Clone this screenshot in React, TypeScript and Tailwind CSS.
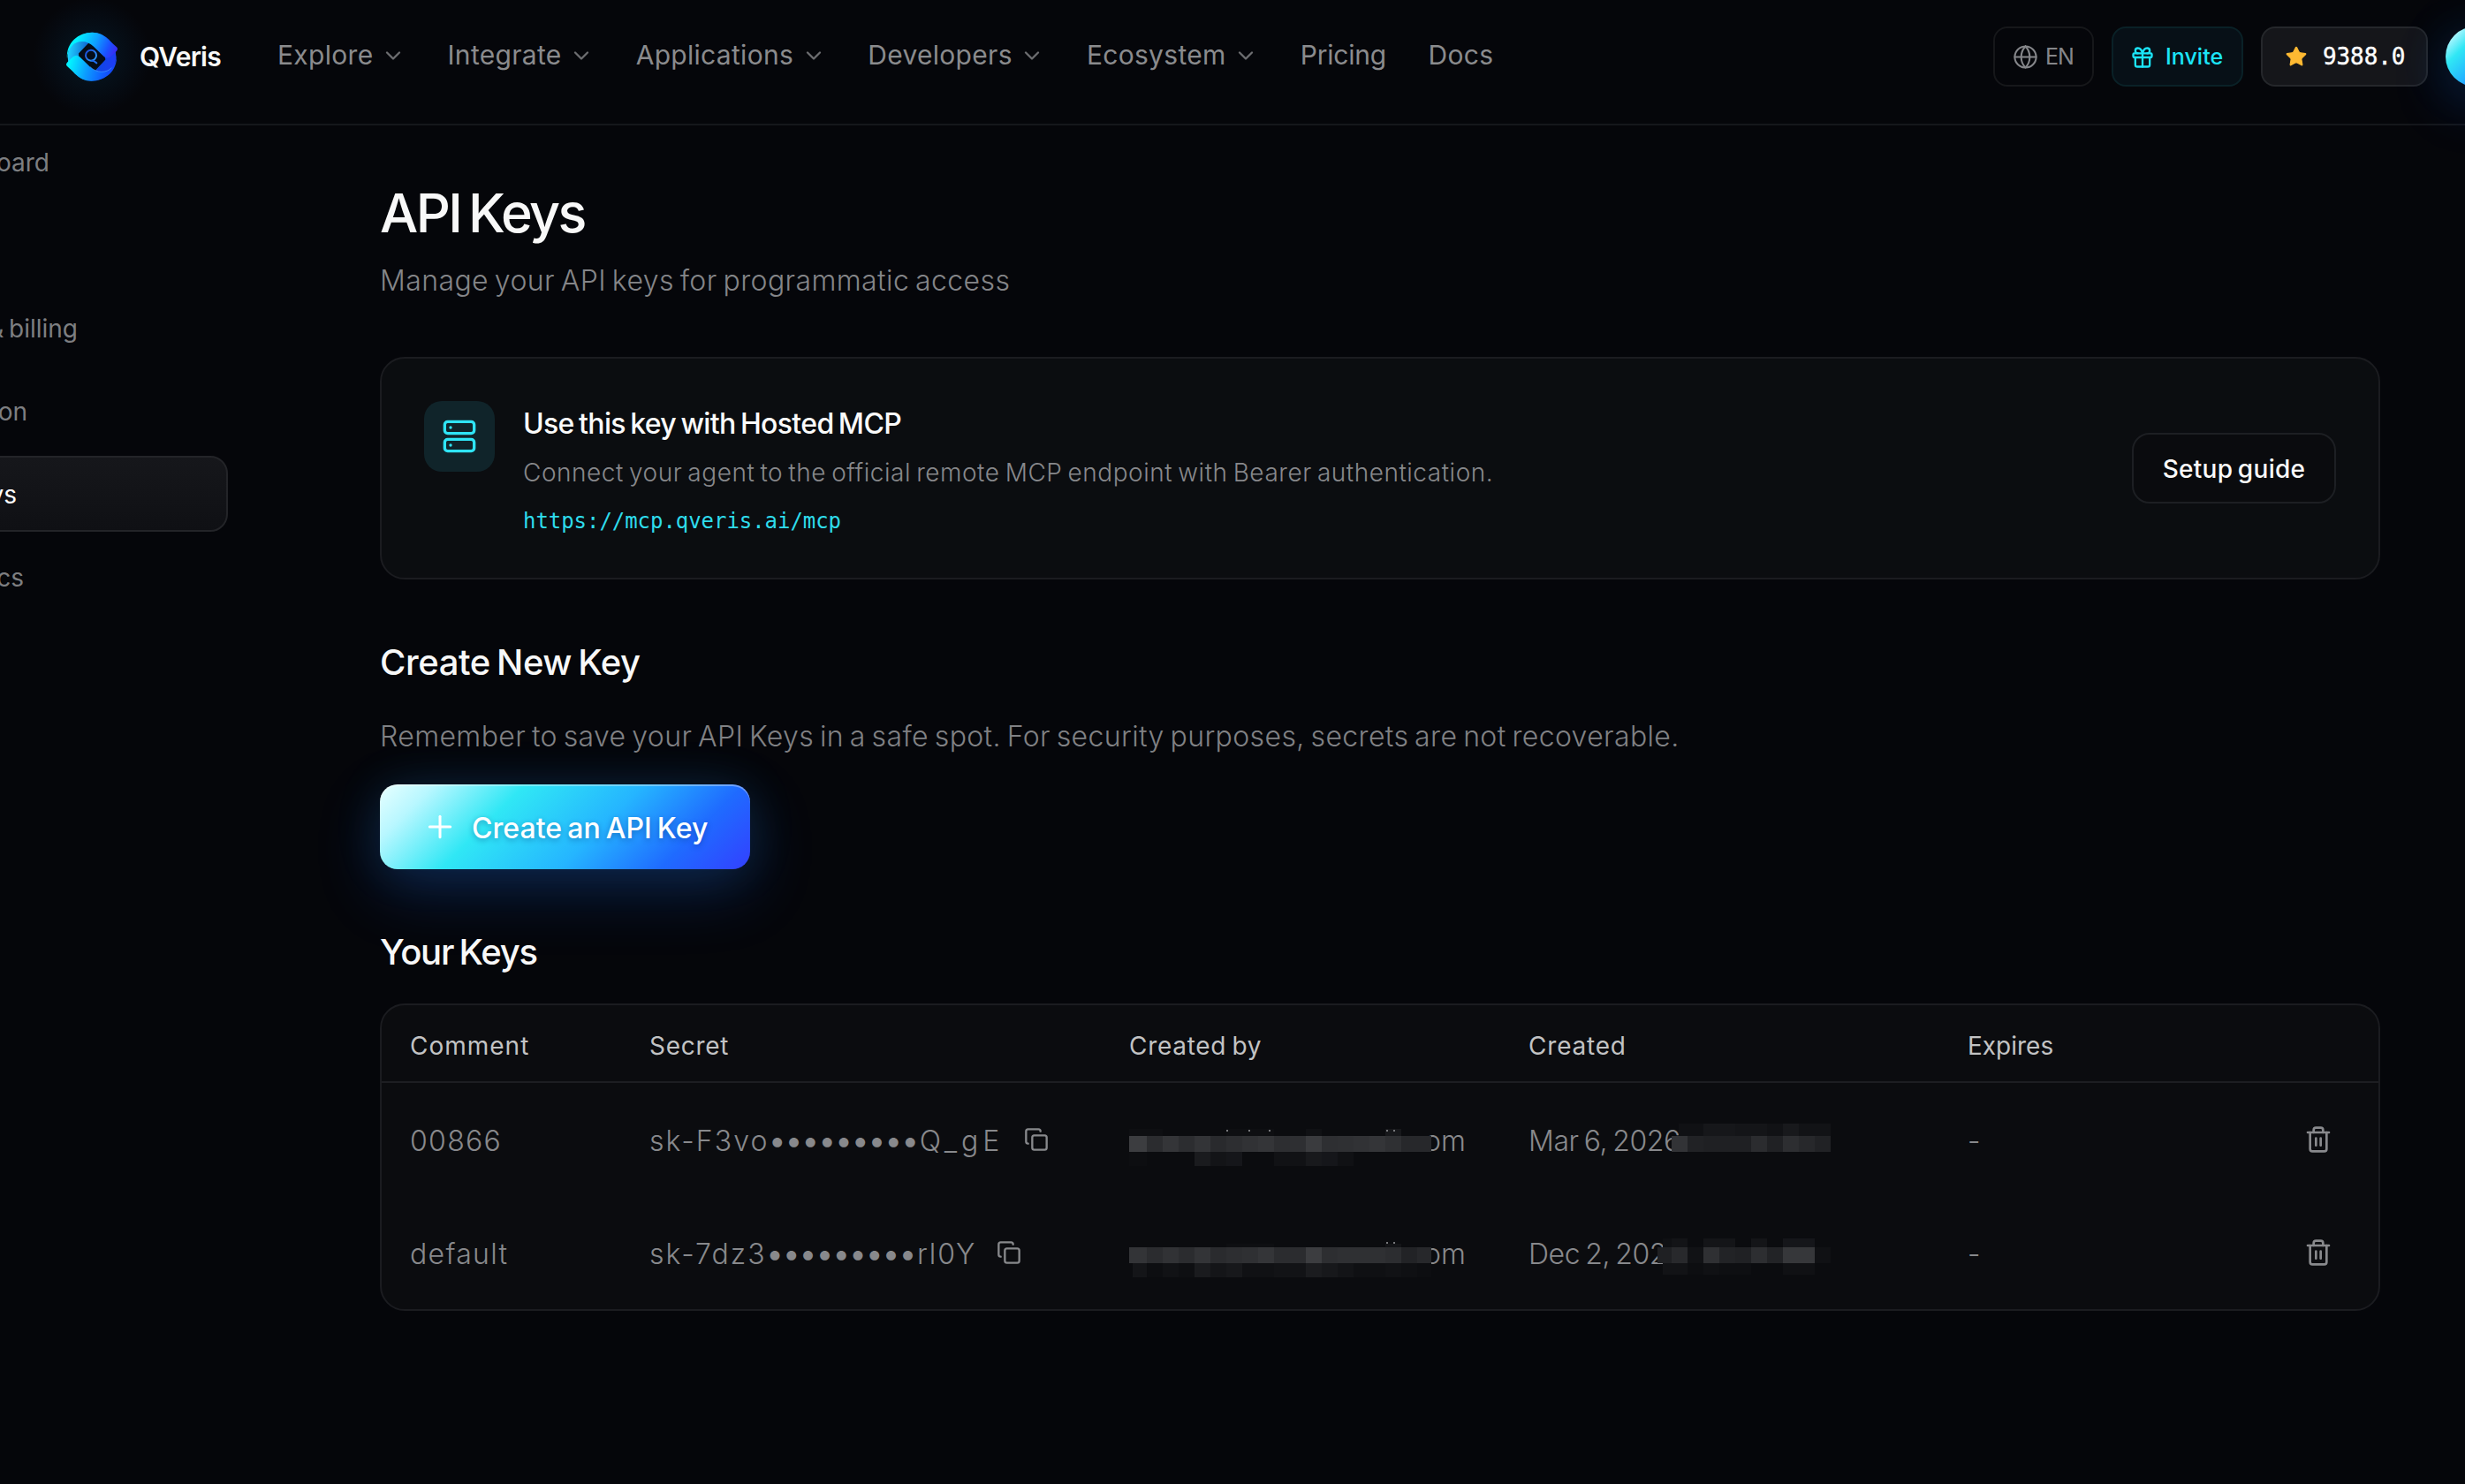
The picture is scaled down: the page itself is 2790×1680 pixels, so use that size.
import { ChevronDown, Copy, Gift, Globe, Plus, Server, Star, Trash2 } from 'lucide-react'

type Cell = [x: number, w: number, color: string]
interface Band { y: number; h: number; cells: Cell[] }

interface KeyRow {
  comment: string
  head: string
  tail: string
  tailClass: string
  owner: Band[]
  ticks: [number, number][]
  date: string
  dateBands: Band[]
}

const NAV = [
  { label: 'Explore', menu: true, cls: '' },
  { label: 'Integrate', menu: true, cls: '' },
  { label: 'Applications', menu: true, cls: '' },
  { label: 'Developers', menu: true, cls: '' },
  { label: 'Ecosystem', menu: true, cls: '' },
  { label: 'Pricing', menu: false, cls: 'tracking-[-0.2px]' },
  { label: 'Docs', menu: false, cls: '' },
]

const SIDE = [
  { label: 'Dashboard', w: 'w-[216px]' },
  { label: '', w: 'w-[140px]' },
  { label: 'Usage & billing', w: 'w-[248px]' },
  { label: 'Invitation', w: 'w-[191px]' },
  { label: 'API Keys', w: 'w-[177px]', active: true },
  { label: 'Analytics', w: 'w-[187px]' },
]

// owner column: first block is 20 wide, the rest 18
function strip(colors: string[]): Cell[] {
  return colors.map((c, i) => (i === 0 ? [0, 20, c] : [20 + (i - 1) * 18, i === 18 ? 16 : 18, c]))
}

const KEYS: KeyRow[] = [
  {
    comment: '00866',
    head: 'sk-F3vo',
    tail: 'Q_gE',
    tailClass: 'tracking-[5px]',
    owner: [
      { y: 52, h: 8, cells: [[0, 38, '#0e0f12'], [110, 54, '#0e0f12'], [200, 18, '#101114'], [290, 18, '#17181b']] },
      { y: 60, h: 18, cells: strip(['#3c3d40', '#2b2c2f', '#343538', '#2c2d30', '#333437', '#292a2d', '#2d2e31', '#313235', '#343538', '#2d2e31', '#2e2f32', '#3a3b3e', '#2e2f32', '#2f3033', '#313235', '#343538', '#2f3033', '#27282b', '#27282b']) },
      { y: 78, h: 16, cells: [[0, 20, '#0d0e11'], [74, 18, '#1a1b1e'], [92, 18, '#131417'], [110, 18, '#15161a'], [164, 36, '#111215'], [200, 18, '#18191c'], [218, 18, '#15161a'], [236, 18, '#101114']] },
    ],
    ticks: [[110, 53], [135, 53], [158, 53], [291, 53], [299, 53]],
    date: 'Mar 6, 2026',
    dateBands: [
      { y: 46, h: 14, cells: [[170, 28, '#101114'], [198, 36, '#16171a'], [234, 36, '#141518'], [270, 18, '#111215'], [288, 18, '#18191c'], [306, 36, '#121316']] },
      { y: 60, h: 18, cells: [[162, 18, '#323336'], [180, 18, '#212225'], [198, 54, '#1f2023'], [252, 18, '#2b2c2f'], [270, 18, '#202124'], [288, 18, '#2d2e31'], [306, 18, '#27282b'], [324, 18, '#212225']] },
    ],
  },
  {
    comment: 'default',
    head: 'sk-7dz3',
    tail: 'rl0Y',
    tailClass: 'tracking-[2px]',
    owner: [
      { y: 54, h: 4, cells: [[110, 54, '#0e0f12'], [290, 18, '#131417']] },
      { y: 58, h: 18, cells: strip(['#333437', '#2b2c2f', '#313235', '#2b2c2f', '#333437', '#2a2b2e', '#2d2e31', '#2f3033', '#343538', '#2b2c2f', '#2b2c2f', '#3c3d40', '#2d2e31', '#2f3033', '#2f3033', '#2f3033', '#2c2d30', '#222326', '#27282b']) },
      { y: 76, h: 16, cells: [[4, 16, '#141518'], ...strip(['#0b0c0f', '#0d0e11', '#111215', '#0e0f12', '#1a1b1e', '#141518', '#17181b', '#101114', '#101114', '#121316', '#121316', '#1b1c1f', '#17181b', '#131417', '#0f1013', '#0f1013', '#111215', '#0f1013', '#0d0e11']).slice(1)] },
    ],
    ticks: [[291, 52], [299, 52]],
    date: 'Dec 2, 2025',
    dateBands: [
      { y: 48, h: 10, cells: [[152, 10, '#0f1013'], [162, 18, '#131417'], [198, 36, '#141518'], [252, 18, '#141518'], [288, 36, '#15161a']] },
      { y: 58, h: 18, cells: [[146, 16, '#1f2023'], [162, 18, '#28292c'], [180, 18, '#111215'], [198, 18, '#2f3033'], [216, 18, '#222326'], [234, 18, '#202124'], [252, 18, '#2d2e31'], [270, 18, '#222326'], [288, 36, '#36373a'], [324, 18, '#101114']] },
      { y: 76, h: 13, cells: [[152, 28, '#121316'], [180, 18, '#0d0e11'], [198, 18, '#101114'], [216, 36, '#0e0f12'], [288, 36, '#101114']] },
    ],
  },
]

function Mosaic({ bands, ticks = [] }: { bands: Band[]; ticks?: [number, number][] }) {
  return (
    <svg className="absolute left-0 top-0" width="352" height="128" shapeRendering="crispEdges">
      {bands.map(b => b.cells.map(([x, w, c]) => <rect key={`${b.y}-${x}`} x={x} y={b.y} width={w} height={b.h} fill={c} />))}
      {ticks.map(([x, y]) => <rect key={x} x={x} y={y} width="2" height="2" fill="#77787b" />)}
    </svg>
  )
}

function Logo() {
  const ribbon = 'M36 127 C32 72 74 38 122 38 C145 38 160 47 172 59 L204 88 Q210 94 204 101 L184 120 Q172 130 160 119 L126 86 C104 64 70 64 53 83 C42 94 37 108 36 127 Z'
  return (
    <svg className="size-20 shrink-0 overflow-visible" viewBox="0 0 240 240" fill="none">
      <defs>
        <radialGradient id="halo">
          <stop offset="0" stopColor="#0b6c90" stopOpacity="0.2" />
          <stop offset="1" stopColor="#0b4c90" stopOpacity="0" />
        </radialGradient>
        <linearGradient id="top" x1="70" y1="60" x2="195" y2="115" gradientUnits="userSpaceOnUse">
          <stop offset="0" stopColor="#02f2ff" />
          <stop offset="0.45" stopColor="#0ea0ff" />
          <stop offset="0.8" stopColor="#1b50ff" />
          <stop offset="1" stopColor="#3a2cf2" />
        </linearGradient>
        <linearGradient id="bottom" x1="45" y1="140" x2="195" y2="180" gradientUnits="userSpaceOnUse">
          <stop offset="0" stopColor="#02f2ff" />
          <stop offset="0.4" stopColor="#0c9cff" />
          <stop offset="0.75" stopColor="#1060ff" />
          <stop offset="1" stopColor="#1640f0" />
        </linearGradient>
        <linearGradient id="ring" x1="38" y1="110" x2="200" y2="130" gradientUnits="userSpaceOnUse">
          <stop offset="0" stopColor="#1fd2ff" />
          <stop offset="0.35" stopColor="#1173d8" />
          <stop offset="0.7" stopColor="#1046e6" />
          <stop offset="1" stopColor="#1f3cf5" />
        </linearGradient>
        <linearGradient id="mark" x1="98" y1="100" x2="138" y2="138" gradientUnits="userSpaceOnUse">
          <stop offset="0" stopColor="#1747d8" />
          <stop offset="0.6" stopColor="#2d86ef" />
          <stop offset="1" stopColor="#2aa5ff" />
        </linearGradient>
      </defs>
      <circle cx="120" cy="120" r="200" fill="url(#halo)" />
      <circle cx="120" cy="120.500" r="82" fill="url(#ring)" />
      <path d="M110 76 L126 84 L162 121 L164 130 L130 166 L112 156 L78 122 L77 110 Z" fill="#050d18" stroke="#050d18" strokeWidth="4" strokeLinejoin="round" />
      <path d={ribbon} fill="url(#top)" />
      <path d="M204 114 C208 169 166 203 118 203 C95 203 80 194 68 182 L36 153 Q30 147 36 140 L56 121 Q68 111 80 122 L114 155 C136 177 170 177 187 158 C198 147 203 133 204 114 Z" fill="url(#bottom)" />
      <path d="M114 155 C136 177 170 177 187 158" stroke="#46a0ff" strokeWidth="2" />
      <circle cx="117" cy="116" r="18" stroke="url(#mark)" strokeWidth="6" />
      <path d="M120 134 L126 135 L136 142" stroke="#1f6cf0" strokeWidth="6" strokeLinecap="round" />
    </svg>
  )
}

function Header() {
  return (
    <header className="flex h-[142px] items-center border-b-2 border-[#15171b] pb-3 pl-16">
      <Logo />
      <span className="ml-3.5 w-[92px] text-[30px] font-semibold tracking-[-0.75px] text-[#f8f8f8]">QVeris</span>
      <nav className="ml-16 flex gap-[47.6px] pb-[3px] text-[30px] tracking-[0.3px] text-[#8a8b8d]">
        {NAV.map(n => (
          <a key={n.label} className={`flex items-center gap-[8.5px] ${n.cls}`}>
            {n.label}
            {n.menu && <ChevronDown size={28} strokeWidth={2} className="text-[#6c6d70]" />}
          </a>
        ))}
      </nav>
      <div className="-mr-[46px] ml-auto flex shrink-0 gap-5">
        <button className="flex h-[68px] w-[114px] items-center gap-2 rounded-2xl border-2 border-[#16171a] pl-5 pt-px text-[25px] tracking-[-1px] text-[#85868a]">
          <Globe size={29} strokeWidth={1.7} className="shrink-0" />
          EN
        </button>
        <button className="flex h-[68px] w-[149px] items-center gap-3 rounded-2xl border-2 border-[#0a2127] bg-[#071017] pl-[19px] pt-px text-[25px] font-medium text-[#1be4f7]">
          <Gift size={28} className="shrink-0" />
          Invite
        </button>
        <div className="flex h-[68px] w-[189px] items-center gap-[17px] rounded-2xl border-2 border-[#25272b] bg-[#15161a] pl-[25px]">
          <Star size={26} className="shrink-0 fill-[#fdb932] text-[#fdb932]" strokeWidth={1} />
          <span className="font-['DejaVu_Sans_Mono',monospace] text-[26px] tracking-[-0.1px] text-white [-webkit-text-stroke:0.4px_white]">9388.0</span>
        </div>
        <div className="size-[68px] rounded-full bg-[linear-gradient(135deg,#e8ffff_0%,#b8f7ff_12%,#30e7f5_32%,#25b5ff_58%,#1f6bff_80%,#3340ff_100%)] shadow-[0_20px_64px_rgba(30,107,255,0.22),0_0_64px_rgba(40,180,255,0.1)]" />
      </div>
    </header>
  )
}

function Sidebar() {
  return (
    <aside className="-ml-40 -mt-0.5 flex w-[418px] shrink-0 flex-col gap-2 text-[28px] text-[#7d7e81]">
      {SIDE.map((s, i) => (
        <a
          key={i}
          className={
            s.active
              ? 'flex h-[86px] items-center rounded-[20px] border-2 border-[#232428] bg-gradient-to-b from-[#16171b] to-[#0f1014] pt-0.5 text-white'
              : 'flex h-[86px] items-center pt-0.5'
          }
        >
          <span className={`whitespace-nowrap text-right ${s.w}`}>{s.label}</span>
        </a>
      ))}
    </aside>
  )
}

function McpCard() {
  return (
    <section className="mt-[62px] flex h-[252px] items-start rounded-[28px] border-2 border-[#1b1c20] bg-[#0b0d10] p-12">
      <div className="grid size-20 shrink-0 place-items-center rounded-[20px] bg-[#10242a]">
        <Server size={40} className="text-[#2fe4f5]" />
      </div>
      <div className="ml-8 mt-0.5">
        <h2 className="h-12 text-[32px] font-medium leading-[48px] tracking-[-0.65px] text-[#fafafa]">Use this key with Hosted MCP</h2>
        <p className="mt-[11px] h-10 text-[28px] font-light leading-10 tracking-[0.52px] text-[#87888b]">
          Connect your agent to the official remote MCP endpoint with Bearer authentication.
        </p>
        <code className="mt-[19px] block h-8 font-['DejaVu_Sans_Mono',monospace] text-[24px] leading-8 tracking-[-0.05px] text-[#2edcec]">
          https://mcp.qveris.ai/mcp
        </code>
      </div>
      <button className="ml-auto mt-9 h-20 w-[231px] rounded-[20px] border-2 border-[#1d1f23] bg-[#0a0b0e] pt-0.5 text-[28px] font-medium tracking-[0.3px] text-[#fafafa]">
        Setup guide
      </button>
    </section>
  )
}

const COLS = 'grid grid-cols-[271px_543px_452px_497px_1fr] pl-8 pr-[52px]'

function KeysTable() {
  return (
    <div className="mt-[31px] overflow-hidden rounded-[28px] border-2 border-[#1b1c20] bg-[#0b0c0f]">
      <div className={`${COLS} h-[88px] items-center border-b-2 border-[#1d1e22] pt-[5px] text-[28px] text-[#c2c3c4]`}>
        <span className="tracking-[1px]">Comment</span>
        <span className="tracking-[0.7px]">Secret</span>
        <span className="tracking-[0.7px]">Created by</span>
        <span className="tracking-[0.8px]">Created</span>
        <span>Expires</span>
      </div>
      {KEYS.map(k => (
        <div key={k.comment} className={`${COLS} h-32 items-center text-[32px] font-light text-[#88898c]`}>
          <span className="pt-[3px] tracking-[1.3px]">{k.comment}</span>
          <div className="flex items-center">
            <span className="pt-[3px] tracking-[2.1px]">{k.head}</span>
            <span className="-ml-0.5 mr-[3px] pt-[2px] text-[40px] leading-none tracking-[-3.7px]">•••••••••</span>
            <span className={`pt-[3px] ${k.tailClass}`}>{k.tail}</span>
            <Copy size={28} className="ml-[23px]" />
          </div>
          <div className="relative flex h-32 items-center pl-[334px] pt-[3px]">
            om
            <Mosaic bands={k.owner} ticks={k.ticks} />
          </div>
          <div className="relative flex h-32 items-center pt-[3px] tracking-[-0.4px]">
            {k.date}
            <Mosaic bands={k.dateBands} />
          </div>
          <div className="flex items-center justify-between">
            <span className="pt-[3px]">-</span>
            <Trash2 size={32} />
          </div>
        </div>
      ))}
    </div>
  )
}

export default function App() {
  return (
    <div className="h-[1680px] w-[2790px] overflow-hidden bg-[#05060a] font-['Inter',sans-serif] [&_*]:[word-spacing:-0.08em]">
      <Header />
      <div className="flex">
        <Sidebar />
        <main className="ml-[172px] w-[2264px] shrink-0 pt-[63px]">
          <h1 className="h-[72px] text-[61px] font-medium leading-[72px] tracking-[-2.6px] text-[#f8f8f8]">API Keys</h1>
          <p className="mt-[17px] h-12 text-[32px] font-light leading-[48px] tracking-[0.4px] text-[#848588]">
            Manage your API keys for programmatic access
          </p>

          <McpCard />

          <h2 className="mt-[66px] h-14 text-[40px] font-medium leading-[56px] tracking-[-0.4px] text-[#f8f8f8]">Create New Key</h2>
          <p className="mt-8 h-12 text-[32px] font-light leading-[48px] tracking-[0.37px] text-[#808184]">
            Remember to save your API Keys in a safe spot. For security purposes, secrets are not recoverable.
          </p>
          <button className="mt-[30px] flex h-24 w-[419px] items-center gap-4 rounded-[20px] bg-[linear-gradient(135deg,#e8ffff_0%,#b8f7ff_12%,#30e7f5_32%,#25b5ff_58%,#1f6bff_80%,#3340ff_100%)] pl-12 text-[32px] font-medium text-white shadow-[inset_0_2px_0_rgba(255,255,255,0.35),0_24px_72px_rgba(30,107,255,0.24),0_0_56px_rgba(60,200,255,0.11)]">
            <Plus size={40} strokeWidth={1.8} />
            <span className="whitespace-nowrap pt-[3px] tracking-[0.05px] [text-shadow:0_2px_6px_rgba(0,40,110,0.4)]">Create an API Key</span>
          </button>

          <h2 className="mt-[66px] h-14 text-[40px] font-medium leading-[56px] tracking-[-1.2px] text-[#f8f8f8]">Your Keys</h2>
          <div className="-mt-px">
            <KeysTable />
          </div>
        </main>
      </div>
    </div>
  )
}
